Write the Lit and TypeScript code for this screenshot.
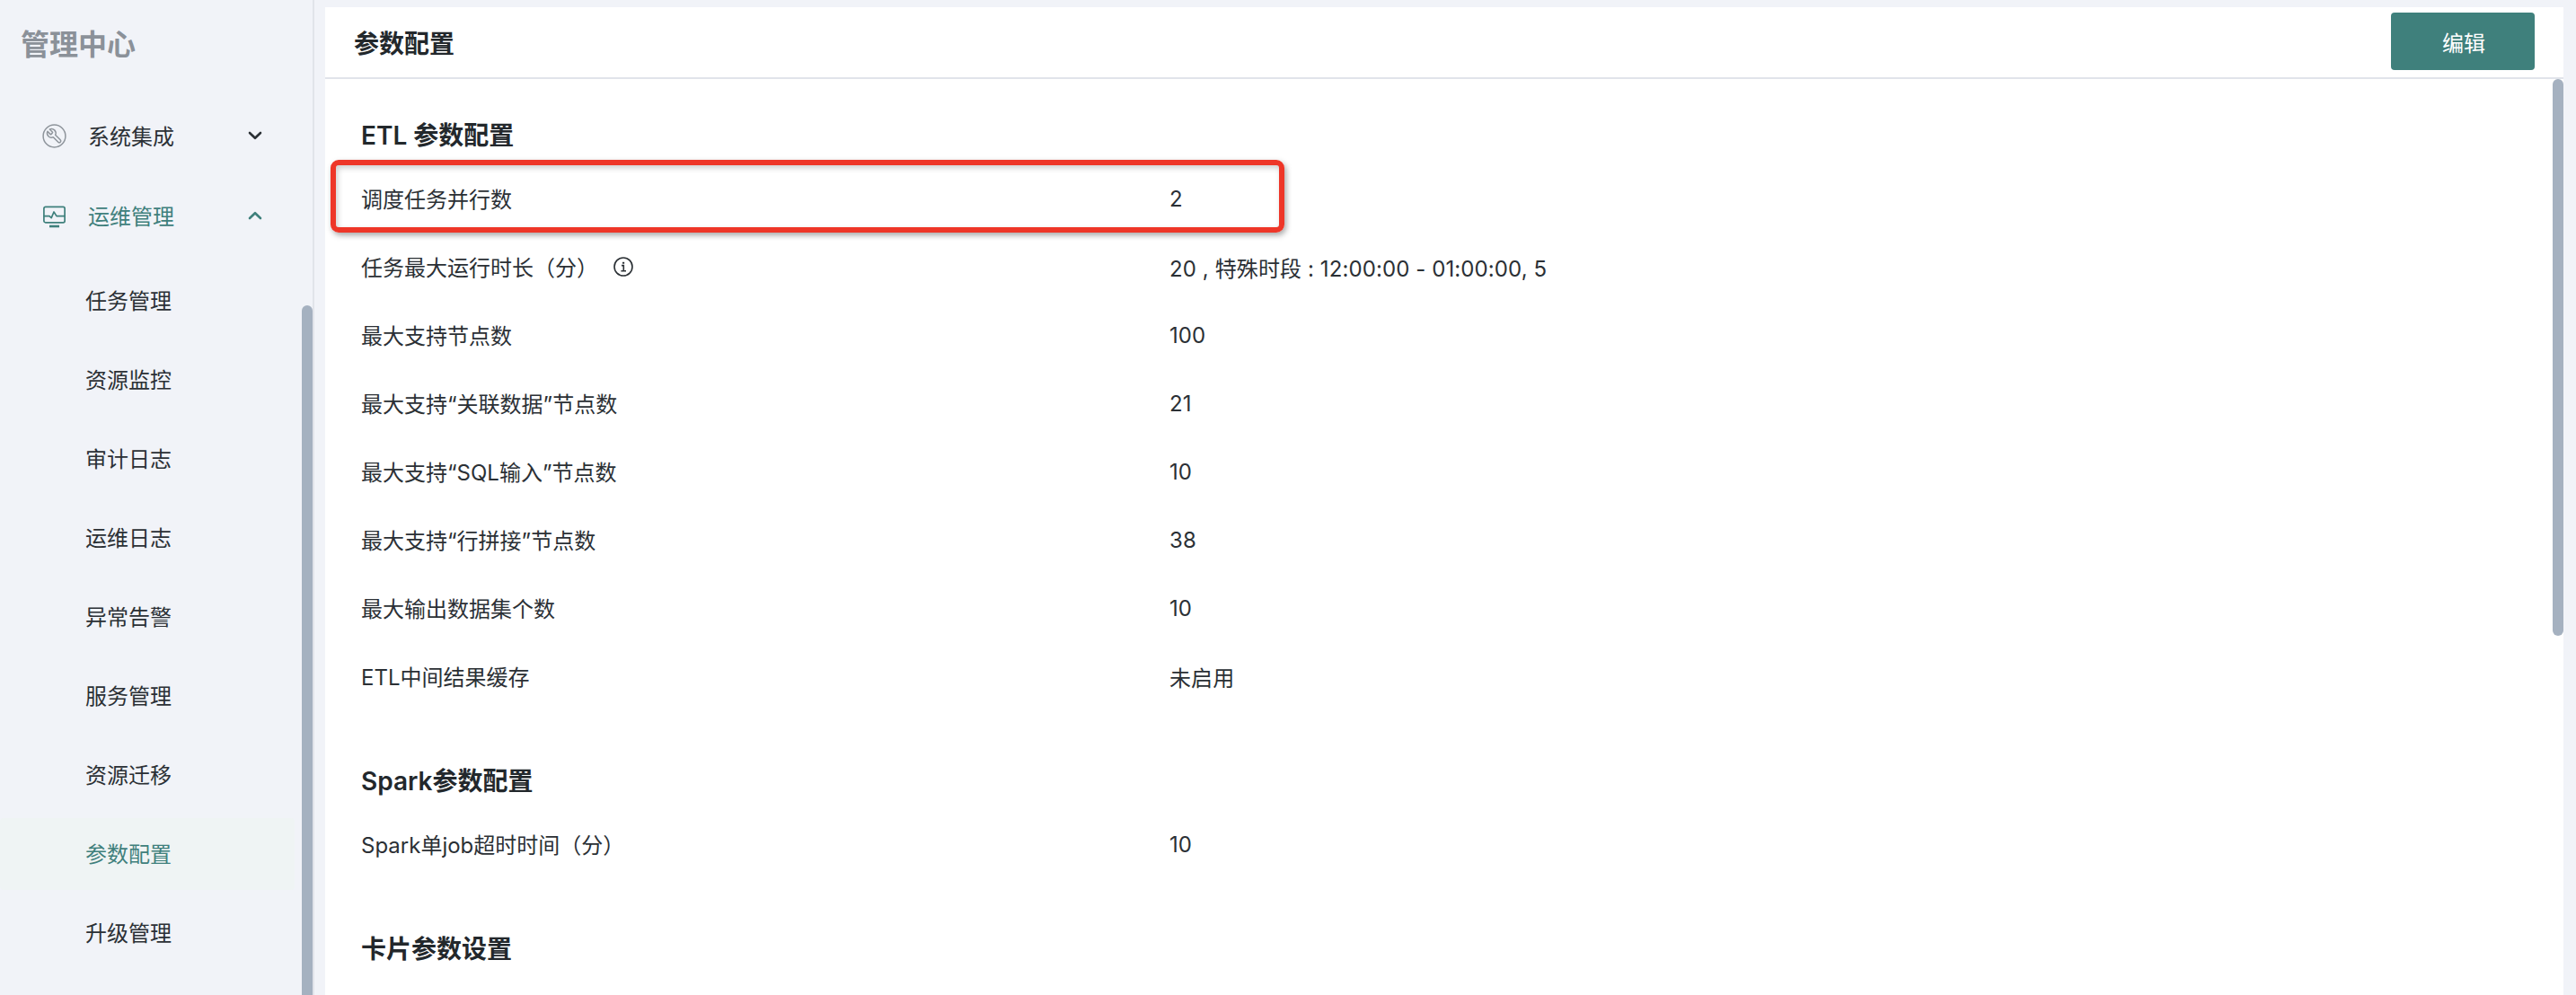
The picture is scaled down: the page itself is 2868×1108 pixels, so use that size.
import { LitElement, html, css, svg } from "lit";
import { customElement } from "lit/decorators.js";

const subs = ["任务管理","资源监控","审计日志","运维日志","异常告警","服务管理","资源迁移","参数配置","升级管理"];
const etl: [string,string][] = [
  ["调度任务并行数","2"],
  ["任务最大运行时长（分）","20 , 特殊时段 : 12:00:00 - 01:00:00, 5"],
  ["最大支持节点数","100"],
  ["最大支持“关联数据”节点数","21"],
  ["最大支持“SQL输入”节点数","10"],
  ["最大支持“行拼接”节点数","38"],
  ["最大输出数据集个数","10"],
  ["ETL中间结果缓存","未启用"],
];

const chevron = (up: boolean) => html`<svg class="chev" width="16" height="10" viewBox="0 0 16 10" fill="none" stroke="currentColor" stroke-width="2.6" stroke-linecap="round" stroke-linejoin="round">
  ${up ? svg`<path d="M2 8 L8 2.2 L14 8"/>` : svg`<path d="M2 2 L8 7.8 L14 2"/>`}</svg>`;

@customElement("app-root")
export class AppRoot extends LitElement {
  static styles = css`
    :host { display: block; width: 2868px; height: 1108px; overflow: hidden; background: #f1f3f8; position: relative;
      font-family: Inter, "Noto Sans CJK SC", sans-serif; color: #2b3035; font-size: 24px; }
    .layout { display: flex; height: 1108px; }
    .side { width: 348px; flex: none; border-right: 2px solid #e1e4ea; position: relative; overflow: hidden; }
    .brand { height: 111px; padding: 32px 0 0 23px; box-sizing: border-box; font-size: 32px; line-height: 36px; font-weight: 600; color: #8b9199; }
    .group { height: 80px; margin-bottom: 9px; display: flex; align-items: center; padding-left: 47px; padding-right: 56px; }
    .group .label { margin-left: 24px; flex: 1; margin-top: -2px; }
    .group.open { color: #3f807c; margin-bottom: 15px; }
    .gicon { width: 27px; height: 27px; flex: none; display: block; }
    .chev { flex: none; display: block; }
    .sub { width: 328px; height: 80px; margin-bottom: 8px; display: flex; align-items: center; padding: 0 0 3px 95px; box-sizing: border-box; border-radius: 4px; }
    .sub.active { background: #eff4f4; color: #3f807c; }
    .sbar { position: absolute; right: 0; top: 340px; bottom: 0; width: 12px; border-radius: 6px 6px 0 0; background: #a5b1c0; }
    .main { width: 2492px; margin: 8px 0 0 12px; background: #fff; position: relative; overflow: hidden; }
    .head { height: 78px; border-bottom: 2px solid #e1e4ea; display: flex; align-items: center; justify-content: space-between; padding: 0 32px 0 32px; }
    .head h1 { margin: 0; font-size: 28px; font-weight: 600; color: #23282c; }
    .btn { width: 160px; height: 64px; border: 0; border-radius: 4px; background: #3f807c; color: #fff; font: inherit; font-size: 24px; padding: 0 0 0 2px; margin-top: -2px; }
    .body { padding: 43px 0 0 40px; }
    .sec { margin-bottom: 59px; }
    .sec h2 { margin: 0 0 12px; font-size: 28px; line-height: 40px; font-weight: 600; color: #23282c; }
    .row { height: 76px; display: flex; align-items: center; padding-bottom: 1px; box-sizing: border-box; }
    .k { width: 900px; flex: none; display: flex; align-items: center; }
    .v { letter-spacing: .1px; padding-top: 1px; }
    .info { margin-left: 17px; display: block; }
    .mbar { position: absolute; right: 0; top: 80px; width: 12px; height: 620px; border-radius: 6px; background: #a5b1c0; }
    .mark { position: absolute; left: 368px; top: 178px; width: 1062px; height: 81px; box-sizing: border-box; border: 6px solid #ee3628; border-radius: 9px;
      box-shadow: 2px 3px 6px rgba(0,0,0,.35), inset 2px 3px 6px rgba(0,0,0,.2); }
  `;
  render() {
    return html`<div class="layout">
      <aside class="side">
        <div class="brand">管理中心</div>
        <div class="group">
          <svg class="gicon" viewBox="0 0 27 27" fill="none" stroke="#8f959c" stroke-width="1.5" stroke-linejoin="round" stroke-linecap="round">
            <circle cx="13.5" cy="13.5" r="12.4"/>
            <g transform="translate(13.5 13.5) scale(-.8 .8) translate(-12 -12)" stroke-width="1.9">
              <path d="M14.7 6.3a1 1 0 0 0 0 1.4l1.6 1.6a1 1 0 0 0 1.4 0l3.77-3.77a6 6 0 0 1-7.94 7.94l-6.91 6.91a2.12 2.12 0 0 1-3-3l6.91-6.91a6 6 0 0 1 7.94-7.94l-3.76 3.76z"/>
            </g>
          </svg>
          <span class="label">系统集成</span>${chevron(false)}
        </div>
        <div class="group open">
          <svg class="gicon" viewBox="0 0 27 27" fill="none" stroke="#3f807c" stroke-width="1.7" stroke-linejoin="round" stroke-linecap="round">
            <rect x="1.9" y="3.4" width="23.2" height="17.4" rx="1.8"/>
            <path d="M2 13.6h6l2.2 2 2.8-6.6 3 4.6h9"/>
            <path d="M8 25h11" stroke-width="2.6" stroke-linecap="butt"/>
          </svg>
          <span class="label">运维管理</span>${chevron(true)}
        </div>
        ${subs.map(s => html`<div class="sub ${s === "参数配置" ? "active" : ""}">${s}</div>`)}
        <div class="sbar"></div>
      </aside>
      <main class="main">
        <div class="head"><h1>参数配置</h1><button class="btn">编辑</button></div>
        <div class="body">
          <section class="sec">
            <h2>ETL 参数配置</h2>
            ${etl.map(([k,v],i) => html`<div class="row"><div class="k">${k}${i===1 ? html`<svg class="info" width="22" height="22" viewBox="0 0 22 22" fill="none" stroke="#2b3035" stroke-width="1.6"><circle cx="11" cy="11" r="10"/><path d="M9 9.6h2.3v6M8.4 15.7h5.6"/><path d="M11.1 5.8v1.9" stroke-width="2.2"/></svg>` : ""}</div><div class="v">${v}</div></div>`)}
          </section>
          <section class="sec">
            <h2>Spark参数配置</h2>
            <div class="row"><div class="k">Spark单job超时时间（分）</div><div class="v">10</div></div>
          </section>
          <section class="sec"><h2>卡片参数设置</h2></section>
        </div>
        <div class="mbar"></div>
      </main>
    </div>
    <div class="mark"></div>`;
  }
}
